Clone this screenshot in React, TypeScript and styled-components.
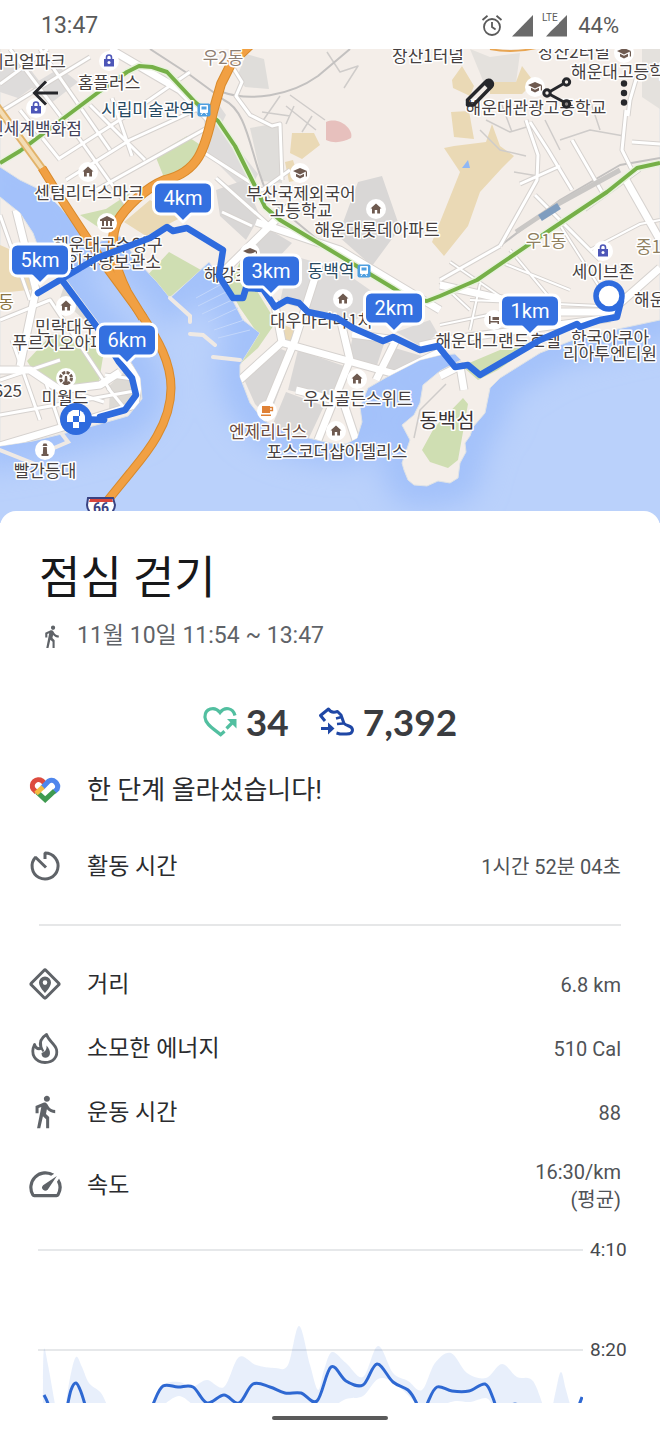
import React from "react";
import styled, { createGlobalStyle } from "styled-components";

const GlobalStyle = createGlobalStyle`
  * { box-sizing: border-box; }
  body {
    margin: 0;
    background: #ffffff;
    color: #2a2b2e;
    font-family: Roboto, "Noto Sans CJK KR", sans-serif;
  }
  h1, p, dl, dd, dt { margin: 0; }
`;

const Screen = styled.div`
  display: flex;
  flex-direction: column;
  width: 100%;
  overflow: hidden;
`;

/* Status bar */

const StatusBar = styled.header`
  display: flex;
  align-items: center;
  justify-content: space-between;
  height: 49px;
  padding: 2px 41px 0;
  color: #5a5a5a;
  font-size: 23px;
`;

const StatusIcons = styled.div`
  display: flex;
  align-items: center;
  gap: 9px;
`;

const Battery = styled.span`
  padding-left: 2px;
  font-size: 22px;
`;

/* Map */

const MapArea = styled.section`
  position: relative;
  height: 474px;
  overflow: hidden;
`;

const MapSvg = styled.svg`
  display: block;
  width: 100%;
  height: 100%;
`;

const MapLabel = styled.text<{ $tone?: string; $size?: number }>`
  font-family: "Noto Sans CJK KR", sans-serif;
  font-size: ${(p) => p.$size ?? 17}px;
  font-weight: 400;
  fill: ${(p) => p.$tone ?? "#463f40"};
  stroke: #ffffff;
  stroke-width: 3px;
  stroke-linejoin: round;
  paint-order: stroke;
`;

const PinText = styled.text`
  font-family: Roboto, sans-serif;
  font-size: 20px;
  fill: #ffffff;
  text-anchor: middle;
`;

const Toolbar = styled.nav`
  position: absolute;
  top: 20px;
  left: 21px;
  right: 12px;
  display: flex;
  justify-content: space-between;
`;

const ToolGroup = styled.div`
  display: flex;
  gap: 24px;

  & > :first-child { margin-right: 5px; }
  & > :last-child { margin-left: -5px; }
`;

const IconButton = styled.button`
  display: flex;
  align-items: center;
  justify-content: center;
  width: 48px;
  height: 48px;
  padding: 0;
  border: 0;
  background: none;
  color: #26272b;
  cursor: pointer;
`;

/* Details sheet */

const Sheet = styled.main`
  position: relative;
  margin-top: -12px;
  padding-top: 42px;
  border-radius: 16px 16px 0 0;
  background: #ffffff;
`;

const Title = styled.h1`
  padding: 0 39px;
  color: #17181a;
  font-size: 45px;
  font-weight: 400;
  line-height: 52px;
`;

const Subtitle = styled.p`
  display: flex;
  align-items: center;
  gap: 13px;
  margin-top: 17px;
  padding: 0 39px;
  color: #5f6368;
  font-size: 23px;
  line-height: 28px;
`;

const Scores = styled.div`
  display: flex;
  align-items: center;
  justify-content: center;
  gap: 29px;
  height: 46px;
  margin-top: 48px;
`;

const Score = styled.div`
  display: flex;
  align-items: center;
  gap: 9px;
  color: #3a3c40;
  font-family: Lato, sans-serif;
  font-size: 37px;
  font-weight: 700;
`;

const Banner = styled.p`
  display: flex;
  align-items: center;
  gap: 25px;
  height: 90px;
  padding: 0 39px 0 28px;
  font-size: 26px;
`;

const Metrics = styled.dl`
  display: flex;
  flex-direction: column;
  padding: 0 39px 0 28px;
`;

const Metric = styled.div<{ $tall?: boolean }>`
  display: flex;
  align-items: center;
  justify-content: space-between;
  height: ${(p) => (p.$tall ? 82 : 64)}px;
`;

const MetricName = styled.dt`
  display: flex;
  align-items: center;
  gap: 25px;
  font-size: 23px;
`;

const Caption = styled.span`
  padding-bottom: 4px;
`;

const MetricValue = styled.dd`
  padding-top: 2px;
  color: #505357;
  font-size: 20px;
  line-height: 28px;
  text-align: right;
  white-space: pre-line;
`;

const Divider = styled.hr`
  width: auto;
  height: 2px;
  margin: 26px 39px;
  border: 0;
  background: #e6e7e8;
`;

/* Pace chart */

const Chart = styled.figure`
  display: flex;
  gap: 7px;
  height: 163px;
  margin: 14px 33px 0 38px;
  overflow: hidden;
`;

const Plot = styled.svg`
  flex: 1;
  min-width: 0;
  height: 164px;
`;

const Axis = styled.div`
  display: flex;
  flex-direction: column;
  gap: 80px;
  width: 37px;
  color: #47494d;
  font-size: 19px;
  line-height: 20px;
`;

const HomeBar = styled.footer`
  display: flex;
  align-items: center;
  justify-content: center;
  height: 26px;
  padding-top: 3px;

  &::before {
    content: "";
    width: 116px;
    height: 4px;
    border-radius: 2px;
    background: #5a5a5a;
  }
`;

/* ---------- icons ---------- */

const WALK =
  "M13.5 5.5c1.1 0 2-.9 2-2s-.9-2-2-2-2 .9-2 2 .9 2 2 2zM9.8 8.9L7 23h2.1l1.8-8 2.1 2v6h2v-7.5l-2.1-2 .6-3C14.8 12 16.8 13 19 13v-2c-1.9 0-3.5-1-4.3-2.4l-1-1.6c-.4-.6-1-1-1.7-1-.3 0-.5.1-.8.1L6 8.3V13h2V9.6l1.8-.7z";

const WalkIcon = ({ size, viewBox = "0 0 24 24" }: { size: number; viewBox?: string }) => (
  <svg width={size} height={size} viewBox={viewBox} fill="#5f6368" aria-hidden="true">
    <path d={WALK} />
  </svg>
);

const AlarmIcon = () => (
  <svg width="22" height="24" viewBox="0 0 22 24" fill="none" stroke="#5a5a5a" strokeWidth="1.8" aria-hidden="true">
    <circle cx="11" cy="13" r="8" />
    <path d="M11 8v5l3.6 2.6M1.5 6l5-4.2M20.500 6l-5-4.200" />
  </svg>
);

const SignalIcon = ({ lte = false }: { lte?: boolean }) => (
  <svg width={lte ? 25 : 21} height="28" viewBox={lte ? "0 0 25 28" : "0 0 21 28"} fill="#6a6a6a" aria-hidden="true">
    {lte ? (
      <>
        <path d="M25 3v21.500H4L9 19l8-7.500V11z" />
        <text x="0" y="9" fontSize="10" fontFamily="Roboto" fill="#5a5a5a">LTE</text>
      </>
    ) : (
      <path d="M21 3v21.500H0z" />
    )}
  </svg>
);

const BackIcon = () => (
  <svg width="28" height="28" viewBox="0 0 28 28" fill="none" stroke="currentColor" strokeWidth="3" aria-hidden="true">
    <path d="M27 14H4M15 2.500L3.500 14 15 25.500" />
  </svg>
);

const PencilIcon = () => (
  <svg width="32" height="32" viewBox="0 0 32 32" fill="none" stroke="currentColor" aria-hidden="true">
    <path d="M3.500 23L22 4.500a3.600 3.600 0 0 1 5.500 5L9.500 28H3.500z" strokeWidth="3.500" strokeLinejoin="round" />
    <path d="M19.500 7l6 6L30 8l-5-6z" fill="currentColor" stroke="none" />
    <path d="M3 22.500l7 6-7 1z" fill="currentColor" stroke="none" />
  </svg>
);

const ShareIcon = () => (
  <svg width="30" height="32" viewBox="0 0 30 32" fill="none" stroke="currentColor" strokeWidth="3" aria-hidden="true">
    <path d="M8 14.500L21 7M8 17.500l13 7" />
    <circle cx="5" cy="16" r="3.200" />
    <circle cx="24.500" cy="5" r="3.200" />
    <circle cx="24.500" cy="27" r="3.200" fill="#8a8584" />
  </svg>
);

const MoreIcon = () => (
  <svg width="8" height="28" viewBox="0 0 8 28" fill="currentColor" aria-hidden="true">
    <circle cx="4" cy="4.500" r="3.200" />
    <circle cx="4" cy="14" r="3.200" />
    <circle cx="4" cy="23.500" r="3.200" />
  </svg>
);

const HeartPointsIcon = () => (
  <svg width="34" height="31" viewBox="0 0 34 31" fill="none" stroke="#52bfa0" strokeWidth="3.200" aria-hidden="true">
    <path d="M32 9.500C30 1.500 21.500.500 17 6.500 11.500-.500 1.500 2.500 2 11.500c.400 7 9 11.500 15.700 17.200l3.800-3.500" />
    <path d="M23.500 22.500L30 16" />
    <path d="M24 13h9.500v9.500z" fill="#52bfa0" stroke="none" />
  </svg>
);

const StepsIcon = () => (
  <svg width="36" height="31" viewBox="0 0 36 31" fill="none" stroke="#1f47a5" strokeWidth="3" strokeLinejoin="round" aria-hidden="true">
    <path d="M7 15L2.500 9.500 10.500 3c2 3.500 5 3.800 9 2.500l3.500 3.500 3 8.500c3 3 8.500 2 8.500 6.500 0 3.500-3 4-6 4h-6.500L18.500 27" />
    <path d="M18 12.500l5.500-1.500M19 18l6-.5" strokeWidth="2.500" />
    <path d="M3 22.500h8" />
    <path d="M10 16.500l6.500 6L10 28.500z" fill="#1f47a5" stroke="none" />
  </svg>
);

const FitIcon = () => (
  <svg width="34" height="30" viewBox="0 0 34 30" fill="none" strokeWidth="5" aria-hidden="true">
    <path d="M17 9.500L14 6.700A6.200 6.200 0 0 0 5.200 15L8.500 18.200" stroke="#dd4b3e" />
    <path d="M14.500 13.500L20.500 7.200A6.200 6.200 0 0 1 29.200 15L26 18" stroke="#4f86ec" />
    <path d="M9 18l8.200 7.600L26.500 17" stroke="#3f9a50" />
    <path d="M8 19.500l7-6.500" stroke="#f5bb41" />
  </svg>
);

const iconProps = {
  width: 34,
  height: 34,
  viewBox: "0 0 34 34",
  fill: "none",
  stroke: "#5f6368",
  strokeWidth: 3,
  "aria-hidden": true,
} as const;

const TimerIcon = () => (
  <svg {...iconProps}>
    <path d="M17 10V4a13 13 0 1 1-9.500 4.200L18 18.500" strokeLinejoin="bevel" />
  </svg>
);

const DistanceIcon = () => (
  <svg {...iconProps}>
    <rect x="6.700" y="6.700" width="20.600" height="20.600" rx="1.500" transform="rotate(45 17 17)" />
    <path fillRule="evenodd" fill="#5f6368" stroke="none" d="M17 9.500a6 6 0 0 0-6 6c0 4.500 6 10.500 6 10.500s6-6 6-10.500a6 6 0 0 0-6-6zm0 3.800a2.300 2.300 0 1 1 0 4.600 2.300 2.300 0 0 1 0-4.600z" />
  </svg>
);

const FlameIcon = () => (
  <svg {...iconProps}>
    <path d="M6.500 13.500C2 23 7 31.500 17 31.500c8.500 0 13-6 11.500-13C27 12.500 20.500 10 18.500 3.500c-5 3-7.500 8-5.500 14-3.500 1-5.500-1-6.500-4z" strokeLinejoin="round" strokeWidth="2.800" />
    <path d="M18.500 14.500c.5 4-1.500 6.500-5 7.500 0 3.500 2 5 4.500 4.800 5-.5 5.500-7.300.5-12.300z" fill="#5f6368" stroke="none" />
    <path d="M13 12c-.5 4 .5 6 2.500 8.500" strokeWidth="2" />
  </svg>
);

const SpeedIcon = () => (
  <svg width="34" height="34" viewBox="1.500 2 20.500 21" fill="#5f6368" aria-hidden="true">
    <path d="M20.380 8.570l-1.230 1.850a8 8 0 0 1-.22 7.580H5.070A8 8 0 0 1 15.580 6.850l1.850-1.230A10 10 0 0 0 3.350 19a2 2 0 0 0 1.720 1h13.850a2 2 0 0 0 1.740-1 10 10 0 0 0-.27-10.440zm-9.790 6.840a2 2 0 0 0 2.830 0l5.660-8.490-8.490 5.660a2 2 0 0 0 0 2.830z" />
  </svg>
);

/* ---------- map data ---------- */

const NORTH_LAND =
  "M0 40H660V320L613 330 573 340 540 353 500 378 490 388 485 413 473 427 470 436 465 443 466 452 460 463 458 478 450 483 438 481 427 486 414 485 408 480 404 470 402 463 410 440 402 425 414 415 420 403 423 385 440 371 461 360 455 354 440 355 420 360 387 377 368 388 360 407 362 422 357 438 346 444 330 443 287 433 263 420 250 403 240 377 240 365 260 333 243 320 222 280 209 262 170 298 157 282 140 264 120 236 90 244 80 230 60 207 45 192 20 180 0 167Z";
const WEST_LAND =
  "M0 197L20 213 33 233 42 258 65 278 100 325 125 352 140 378 142 399 128 416 100 424 70 432 33 441 0 446Z";

const AREAS: [string, string][] = [
  ["#dedcdb", "M0 68L20 56 40 82 18 98 0 92Z M30 86L60 68 78 82 50 104Z"],
  ["#dedcdb", "M204 120l20 10 34 44-10 20-40-40z M212 95l14 20-10 20-10-10z"],
  ["#dfddda", "M246 54l18 5 5 30-24-2-8-10z M250 128l28-5 4 60-20-2z"],
  ["#d9d7d6", "M216 190l28-10 16 36-14 24-26-24z M262 225l30 18-15 16-30 2z M358 182l24-6 18 52-28 38-34-30z"],
  ["#dddbda", "M290 255l50 14 50 35-40 18-70-20z M396 332l34-12 8 14-18 12z"],
  ["#d9d7d6", "M243 377l38-28 12 5-24 64-14-14z M298 350l46 16-14 34-42-10z M286 392l38 14-16 34-36-14z M354 330l30 14-8 24-28-8z M388 346l34 10-34 18-10-2z"],
  ["#e4e1dd", "M470 49l20 8 30-4-4 30-30 5z M642 49h18v60l-18-12z"],
  ["#dddad5", "M70 268l20 10 30 42-25 10-35-32z M110 385l15-14 12 12-4 20-24 8z"],
  ["#cfdeb2", "M155 155l32-19 18 12-22 28-18 4z M80 215l26-6 24-16-10 26-22 8z M52 334l46 5 6 12-5 30-18 8-40-6-14-22z"],
  ["#cfdeb2", "M143 280l26-28 32 18-31 27z M240 262l14 24 22 36-18 26-18 16 18-30-18-26-12-22z M462 366l52-22 24-2-40 28-20 10z M463 398l5 6-10 56-10 8-18-6-8-12 12-22z"],
  ["#ead9b5", "M292 133l22 0 6 12-18 14-12-6z M285 162l8-2 6 20-10 2z M452 80l10-14 12 20-4 10-17-8z M490 82h26l6-16 12 16-12 12H490z M451 112l18-1 5 28-20-2z M454 146l32-4 6-18 8 22 14 10-12 12-22 24-12 34-24 30-12-14 28-70-16-24z"],
  ["#e7c0bd", "M326 122c14-6 28 8 25 16-8 4-16 6-25 2z"],
  ["#ead9b5", "M150 200l30 18-34 18-22-14z M0 245l18 8 20 36-38 4z M284 325l12 5-4 12-12-4z"],
];

const ROADS: [number, string][] = [
  [2, "M10 49L62 118M40 49L110 150M0 84L48 49M0 112L90 57M20 110L60 160M66 120L130 210M90 105L145 160M112 98L132 156M60 158L132 112L190 72M66 180L130 140L200 108M96 190L214 124"],
  [2, "M0 215L30 300M0 320L50 300L110 390M12 340L40 420M0 380L60 360M45 380L60 425M0 415L140 390M90 300L118 350M105 375L140 380M108 388L126 410M82 395L104 402"],
  [2, "M232 66L242 82L236 96L250 115L272 126L280 124L282 180M200 150L262 190L290 170M216 178L268 224M222 212L252 226"],
  [2, "M526 120L538 155L537 180L500 246M530 122L548 150L572 190M572 140L602 192M500 246L440 280M520 184L560 166M535 195L560 220L600 260M626 110L622 150L632 170M632 142L660 144M640 66L630 100L628 116"],
  [1, "M585 210L640 170M590 250L640 224L660 220M560 225L600 288M500 262L570 290M440 282L470 310M480 284L470 330M440 325L560 300M510 250L560 310M470 300L600 306M450 262L520 310"],
];

const AVENUES: string[] = [
  "M110 49L180 90L210 120",
  "M225 270L290 206",
  "M256 222L340 250L440 310",
  "M320 262L295 340L262 420",
  "M280 342L395 374L440 352",
  "M240 380L282 342L274 300",
  "M340 318L350 360L318 440",
  "M352 334L396 340L376 380",
  "M296 390L350 404",
  "M344 404L356 440",
  "M440 285L560 312L610 312L660 268",
  "M626 180L660 240",
  "M0 446L60 428L135 405L139 380L66 282L40 240",
  "M0 370L30 370L60 390L100 385L120 372",
  "M20 366L36 290L16 210",
  "M420 346L446 340L610 318",
  "M440 376L460 366L464 390",
];

const RAILS: string[] = [
  "M222 92C250 102 290 96 318 76L350 49",
  "M150 49L190 75L224 100C250 112 250 160 270 200L330 250L410 296",
  "M500 246L560 200L620 165L660 158",
];

const LANES =
  "M290 95L325 120M286 106L316 130M262 112L290 116M280 96L262 122M294 106L286 124M312 116L302 132M327 52L340 72L358 66L344 88M480 130L500 150L526 156M486 120L510 132L530 126M500 100L512 132M560 140L590 130L624 136M514 172L538 176M545 120L560 150M590 100L600 130M414 438L420 410L446 384";

const LABELS: [string, number, number, ("start" | "middle" | "end")?, string?, number?][] = [
  ["페리얼파크", 66, 68, "end"],
  ["홈플러스", 109, 89],
  ["우2동", 223, 64, "middle", "#8f7f73"],
  ["시립미술관역", 148, 116, "middle", "#274a63"],
  ["신세계백화점", 82, 135, "end", "#45435a"],
  ["센텀리더스마크", 89, 199],
  ["해운대구수영구", 108, 251],
  ["견인차량보관소", 161, 268, "end"],
  ["부산국제외국어", 301, 200],
  ["고등학교", 301, 217],
  ["해운대롯데아파트", 377, 236],
  ["장산1터널", 428, 62],
  ["장산2터널", 574, 58],
  ["해운대고등학교", 571, 78, "start"],
  ["해운대관광고등학교", 536, 114],
  ["우1동", 546, 247, "middle", "#8f7f60"],
  ["중1동", 636, 253, "start", "#8f7f60"],
  ["세이브존", 603, 278],
  ["해운대", 634, 306, "start"],
  ["한국아쿠아", 610, 344],
  ["리아투엔티원", 610, 360],
  ["해운대그랜드호텔", 498, 347],
  ["동백역", 331, 277, "middle", "#274a63"],
  ["해강초", 204, 281, "start"],
  ["대우마리나1차", 270, 327, "start"],
  ["우신골든스위트", 358, 405],
  ["엔제리너스", 268, 438, "middle", "#6a4a40"],
  ["포스코더샵아델리스", 337, 458],
  ["민락대우", 35, 333, "start"],
  ["푸르지오아파트", 12, 349, "start"],
  ["미월드", 65, 404],
  ["빨간등대", 45, 477],
  ["GS25", 22, 397, "end"],
  ["동", 14, 308, "end", "#8a7444"],
  ["동백섬", 447, 428, "middle", "#3a3435", 20],
];

type PoiKind = "home" | "school" | "shop" | "museum" | "cafe" | "tower" | "park" | "hotel";

const POIS: [PoiKind, number, number][] = [
  ["home", 88, 172],
  ["home", 376, 209],
  ["home", 343, 299],
  ["home", 357, 379],
  ["home", 336, 431],
  ["home", 66, 306],
  ["school", 300, 173],
  ["school", 535, 87],
  ["school", 624, 53],
  ["school", 250, 253],
  ["shop", 109, 61],
  ["shop", 36, 108],
  ["shop", 603, 251],
  ["museum", 107, 223],
  ["cafe", 267, 411],
  ["tower", 45, 450],
  ["park", 66, 378],
  ["hotel", 494, 320],
];

const Poi = ({ kind, x, y }: { kind: PoiKind; x: number; y: number }) => (
  <g transform={`translate(${x} ${y})`} fill="#6e5a50">
    <circle r="10" fill="#ffffff" />
    {kind === "home" && <path d="M0-5.500L5.500-.5H4V4.500H1.200V1H-1.200V4.500H-4V-.5H-5.500z" />}
    {kind === "school" && <path d="M0-5L7-2 0 1.500-7-2zM-4 .8L0 2.800 4 .8V3.500L0 5.500-4 3.500zM5.800-1.500H7V3.500H5.800z" />}
    {kind === "shop" && (
      <g>
        <path d="M-5-2H5V5.500H-5z" fill="#4d56b8" />
        <path d="M-2.500-1.500V-3.500a2.500 2.500 0 0 1 5 0v2" fill="none" stroke="#4d56b8" strokeWidth="1.600" />
        <circle cy="1.500" r="1.500" fill="#ffffff" />
      </g>
    )}
    {kind === "museum" && <path d="M0-7L7-3.500V-2H5V3H3V-2H1V3H-1V-2H-3V3H-5V-2H-7V-3.500zM-6 4.500H6V6H-6z" />}
    {kind === "cafe" && (
      <g fill="#df8136">
        <path d="M-5-5H3V2H-5zM-6 3.500H4V5H-6z" />
        <path d="M3-3.500h2.500v3H3" fill="none" stroke="#df8136" strokeWidth="1.300" />
      </g>
    )}
    {kind === "tower" && <path d="M-1.500-6.500H1.500L2.500-4H-2.500zM-1.800-3H1.800L2.200 4H3.500V6H-3.500V4H-2.200z" />}
    {kind === "park" && (
      <g>
        <circle r="5.500" fill="none" stroke="#6e5a50" strokeWidth="3" strokeDasharray="3 1.300" />
        <path d="M-1-2H1L2 7H-2z" />
      </g>
    )}
    {kind === "hotel" && <path d="M-5-4H-3.500V1H5V4H3.500V2.500H-3.500V4H-5zM-1.500-3H5V0H-1.500z" />}
  </g>
);

const Station = ({ x, y }: { x: number; y: number }) => (
  <g transform={`translate(${x} ${y})`}>
    <rect x="-6.500" y="-6.500" width="13" height="13" rx="2" fill="#4f9fe0" />
    <path d="M-3.500-4.500h7v7h-7zM-3 5l1.500-2M3 5L1.500 3" fill="#ffffff" stroke="#ffffff" />
    <path d="M-2.500-3.500h5v3h-5z" fill="#4f9fe0" />
  </g>
);

const PINS: [string, number, number][] = [
  ["1km", 530, 336],
  ["2km", 394, 333],
  ["3km", 271, 296],
  ["4km", 183, 223],
  ["5km", 40, 285],
  ["6km", 127, 365],
];

const Pin = ({ label, x, y }: { label: string; x: number; y: number }) => (
  <g transform={`translate(${x} ${y})`}>
    <path
      d="M0-1L-8-9H-22.500a7 7 0 0 1-7-7V-34a7 7 0 0 1 7-7H22.500a7 7 0 0 1 7 7V-16a7 7 0 0 1-7 7H8z"
      fill="#3470e0"
      stroke="#ffffff"
      strokeWidth="3"
      strokeLinejoin="round"
    />
    <PinText y={-18}>{label}</PinText>
  </g>
);

const ROUTE_OUT =
  "M609 296L621 301 617 317 600 320 580 327 577 324 540 340 480 375 468 365 455 367 438 346 420 350 393 337 383 341 353 328 337 318 308 312 299 303 287 300 275 307 263 289 246 288 243 298 233 298 219 276 223 250 187 228 173 231 167 227 150 238 97 258 38 293";
const ROUTE_BACK = "M62 280L97 327 119 362 132 378 136 395 125 410 100 417 104 420 77 419";
const HIGHWAY_SOUTH = "M42 168L60 197 85 235 107 268 143 317 C158 340 171 362 171 388 C171 425 145 455 130 473 L108 500";
const HIGHWAY_NORTH = "M250 45L232 62 221 84 213 112 C205 150 198 172 165 180 C145 188 125 208 117 222 C109 240 112 262 127 292 L143 318";
const SUBWAY =
  "M0 163L20 151 60 121 100 91 127 72 139 66 152 67 167 72 195 102 218 121 235 146 256 188 265 207 280 220 330 250 393 288 410 299 427 301 440 296 477 280 550 230 607 192 637 168 660 163";

const MapView = () => (
  <MapSvg viewBox="0 49 660 474" preserveAspectRatio="xMidYMid slice" role="img" aria-label="이동 경로 지도">
    <defs>
      <filter id="shore" x="-10%" y="-10%" width="120%" height="120%">
        <feGaussianBlur stdDeviation="14" />
      </filter>
      <clipPath id="land">
        <path d={NORTH_LAND} />
        <path d={WEST_LAND} />
      </clipPath>
      <clipPath id="flag">
        <circle cx="76" cy="419" r="9.500" />
      </clipPath>
    </defs>
    <rect y="49" width="660" height="480" fill="#bad1fb" />
    <g filter="url(#shore)" fill="none" stroke="#a3c1fa" strokeWidth="44">
      <path d={NORTH_LAND} />
      <path d={WEST_LAND} />
    </g>
    <g fill="#f4eee9" stroke="#dfe3e6" strokeWidth="1">
      <path d={NORTH_LAND} />
      <path d={WEST_LAND} />
    </g>
    <g clipPath="url(#land)" fill="none" strokeLinejoin="round">
      {AREAS.map(([fill, d]) => (
        <path key={d} d={d} fill={fill} />
      ))}
      <path d={LANES} stroke="#cfccca" strokeWidth="1.500" />
      {RAILS.map((d) => (
        <path key={d} d={d} stroke="#c3c1c0" strokeWidth="2" />
      ))}
      {ROADS.map(([w, d]) => (
        <path key={d} d={d} stroke="#d6d2cf" strokeWidth={w + 3} />
      ))}
      {AVENUES.map((d) => (
        <path key={d} d={d} stroke="#d6d2cf" strokeWidth="9" />
      ))}
      {ROADS.map(([w, d]) => (
        <path key={d} d={d} stroke="#ffffff" strokeWidth={w + 1} />
      ))}
      {AVENUES.map((d) => (
        <path key={d} d={d} stroke="#ffffff" strokeWidth="7" />
      ))}
      <path d="M516 232L558 204 620 170" stroke="#c9c7c5" strokeWidth="5" />
      <path d="M540 218L559 206" stroke="#7f9dbf" strokeWidth="7" />
      <path d="M462 168l6-8 2 8z" fill="#8fb7f5" />
    </g>
    <g fill="none" stroke="#efe9e4" strokeLinecap="round" strokeWidth="4">
      <path d="M170 298L190 316V322M190 334L203 335 215 345M213 357L240 360M62 434L68 442 54 448M0 450L40 466" />
    </g>
    <g stroke="#c3d7fb" strokeWidth="1">
      <path d="M196 298L220 285M198 306L226 292M202 314L232 300M208 322L238 308M214 330L244 320M218 338L250 330" />
    </g>
    <g fill="none" strokeLinejoin="round">
      <path d={SUBWAY} stroke="#e9f2df" strokeWidth="7" />
      <path d={SUBWAY} stroke="#76b048" strokeWidth="4" />
      <path d="M-4 105L20 138 44 171" stroke="#e2b36a" strokeWidth="8" />
      <path d="M-4 105L20 138 44 171" stroke="#f3dcb4" strokeWidth="4" />
      <path d={HIGHWAY_SOUTH} stroke="#d98a2b" strokeWidth="9" />
      <path d={HIGHWAY_NORTH} stroke="#d98a2b" strokeWidth="10" />
      <path d={HIGHWAY_SOUTH} stroke="#f1a043" strokeWidth="7" />
      <path d={HIGHWAY_NORTH} stroke="#f1a043" strokeWidth="8" />
      <path d="M490 49Q515 54 540 47" stroke="#e8a552" strokeWidth="2" />
    </g>
    {POIS.map(([kind, x, y]) => (
      <Poi key={`${x}-${y}`} kind={kind} x={x} y={y} />
    ))}
    <Station x={204} y={110} />
    <Station x={364} y={271} />
    {LABELS.map(([text, x, y, anchor = "middle", tone, size]) => (
      <MapLabel key={`${text}${x}`} x={x} y={y} textAnchor={anchor} $tone={tone} $size={size}>
        {text}
      </MapLabel>
    ))}
    <g>
      <path d="M88 498H113L115 505Q114 515 101 520 88 515 87 505z" fill="#ffffff" stroke="#3a4383" strokeWidth="2" />
      <path d="M90 499H112L113 502H89z" fill="#d9463c" />
      <text x="101" y="513" fontSize="14" fontWeight="700" fontFamily="Roboto" textAnchor="middle" fill="#3a4383">66</text>
    </g>
    <g fill="none" stroke="#2e6bde" strokeWidth="6.500" strokeLinejoin="round" strokeLinecap="round">
      <path d={ROUTE_OUT} />
      <path d={ROUTE_BACK} />
    </g>
    <circle cx="609" cy="296" r="13" fill="#ffffff" stroke="#2e6bde" strokeWidth="5.500" />
    <circle cx="76" cy="419" r="16" fill="#2e6bde" />
    <g clipPath="url(#flag)" fill="#ffffff">
      <path d="M66 409h7v7h-7zM80 409h7v7h-7zM73 410h6v6h-6zM67 416h6v6h-6zM79 416h6v6h-6zM73 422h6v6h-6z" />
    </g>
    {PINS.map(([label, x, y]) => (
      <Pin key={label} label={label} x={x} y={y} />
    ))}
  </MapSvg>
);

/* ---------- chart ---------- */

type Point = [number, number];

const smooth = (pts: Point[]) =>
  pts.reduce((d, [x, y], i) => {
    if (i === 0) return `M${x} ${y}`;
    const [px, py] = pts[i - 1];
    const before = pts[i - 2] ?? pts[i - 1];
    const after = pts[i + 1] ?? pts[i];
    const c1 = [px + (x - before[0]) / 6, py + (y - before[1]) / 6];
    const c2 = [x - (after[0] - px) / 6, y - (after[1] - py) / 6];
    return `${d}C${c1.join(" ")} ${c2.join(" ")} ${x} ${y}`;
  }, "");

const BANDS: Point[][] = [
  [[5, 170], [5, 140], [6, 109], [10, 125], [18, 170]],
  [[27, 170], [32, 138], [38, 117], [44, 127], [51, 143], [63, 153], [71, 170]],
  [
    [112, 175], [125, 146], [141, 142], [154, 147], [169, 140], [186, 147], [201, 117], [218, 125], [237, 128],
    [250, 125], [261, 86], [272, 125], [280, 150], [286, 130], [294, 112], [308, 123], [325, 137], [340, 106], [355, 133],
    [370, 141], [384, 150], [397, 123], [413, 113], [429, 133], [448, 138], [464, 124], [479, 137], [495, 141], [508, 175],
  ],
  [[513, 175], [518, 150], [523, 132], [528, 150], [535, 175]],
];

const GAPS: Point[][] = [
  [[124, 166], [141, 156], [156, 166]],
  [[294, 168], [308, 159], [325, 156], [340, 139], [355, 142], [370, 155], [382, 168]],
  [[404, 165], [418, 161], [432, 162], [448, 158], [455, 166]],
];

const LINES: Point[][] = [
  [[6, 155], [9, 161], [13, 172]],
  [[29, 168], [33, 150], [38, 143], [43, 152], [48, 168]],
  [
    [112, 175], [116, 162], [125, 146], [140, 147], [155, 147], [169, 163], [186, 155], [201, 163], [215, 144],
    [232, 147], [247, 153], [263, 153], [279, 161], [293, 127], [308, 141], [325, 145], [339, 124], [355, 142], [370, 150],
    [378, 162], [382, 175],
  ],
  [[386, 175], [390, 162], [399, 147], [414, 151], [431, 151], [447, 144], [455, 158], [460, 175]],
  [[471, 166], [477, 164], [483, 166]],
  [[540, 168], [544, 157]],
];

const PaceChart = () => (
  <Chart aria-label="속도 그래프">
    <Plot viewBox="0 0 545 164" preserveAspectRatio="none">
      <g stroke="#e6e8ea" strokeWidth="2">
        <path d="M0 10H545M0 110H545" />
      </g>
      {BANDS.map((pts) => (
        <path key={pts[0][0]} d={`${smooth(pts)}Z`} fill="#2e6bde" fillOpacity="0.11" />
      ))}
      {GAPS.map((pts) => (
        <path key={pts[0][0]} d={`${smooth(pts)}Z`} fill="#ffffff" />
      ))}
      {LINES.map((pts) => (
        <path key={pts[0][0]} d={smooth(pts)} fill="none" stroke="#2e68d2" strokeWidth="3" />
      ))}
    </Plot>
    <Axis>
      <span>4:10</span>
      <span>8:20</span>
    </Axis>
  </Chart>
);

/* ---------- screen ---------- */

interface MetricData {
  icon: React.ReactNode;
  name: string;
  value: string;
  tall?: boolean;
}

const DETAILS: MetricData[] = [
  { icon: <DistanceIcon />, name: "거리", value: "6.8 km" },
  { icon: <FlameIcon />, name: "소모한 에너지", value: "510 Cal" },
  { icon: <WalkIcon size={34} viewBox="1 1 22.500 22.500" />, name: "운동 시간", value: "88" },
  { icon: <SpeedIcon />, name: "속도", value: "16:30/km\n(평균)", tall: true },
];

const MetricRow = ({ icon, name, value, tall }: MetricData) => (
  <Metric $tall={tall}>
    <MetricName>
      {icon}
      <Caption>{name}</Caption>
    </MetricName>
    <MetricValue>{value}</MetricValue>
  </Metric>
);

export default function App() {
  return (
    <Screen>
      <GlobalStyle />
      <StatusBar>
        <span>13:47</span>
        <StatusIcons>
          <AlarmIcon />
          <SignalIcon />
          <SignalIcon lte />
          <Battery>44%</Battery>
        </StatusIcons>
      </StatusBar>
      <MapArea>
        <MapView />
        <Toolbar>
          <IconButton aria-label="뒤로">
            <BackIcon />
          </IconButton>
          <ToolGroup>
            <IconButton aria-label="수정">
              <PencilIcon />
            </IconButton>
            <IconButton aria-label="공유">
              <ShareIcon />
            </IconButton>
            <IconButton aria-label="더보기">
              <MoreIcon />
            </IconButton>
          </ToolGroup>
        </Toolbar>
      </MapArea>
      <Sheet>
        <Title>점심 걷기</Title>
        <Subtitle>
          <WalkIcon size={25} />
          11월 10일 11:54 ~ 13:47
        </Subtitle>
        <Scores>
          <Score>
            <HeartPointsIcon />
            34
          </Score>
          <Score>
            <StepsIcon />
            7,392
          </Score>
        </Scores>
        <Banner>
          <FitIcon />
          <Caption>한 단계 올라섰습니다!</Caption>
        </Banner>
        <Metrics>
          <MetricRow icon={<TimerIcon />} name="활동 시간" value="1시간 52분 04초" />
        </Metrics>
        <Divider />
        <Metrics>
          {DETAILS.map((m) => (
            <MetricRow key={m.name} {...m} />
          ))}
        </Metrics>
        <PaceChart />
      </Sheet>
      <HomeBar />
    </Screen>
  );
}
